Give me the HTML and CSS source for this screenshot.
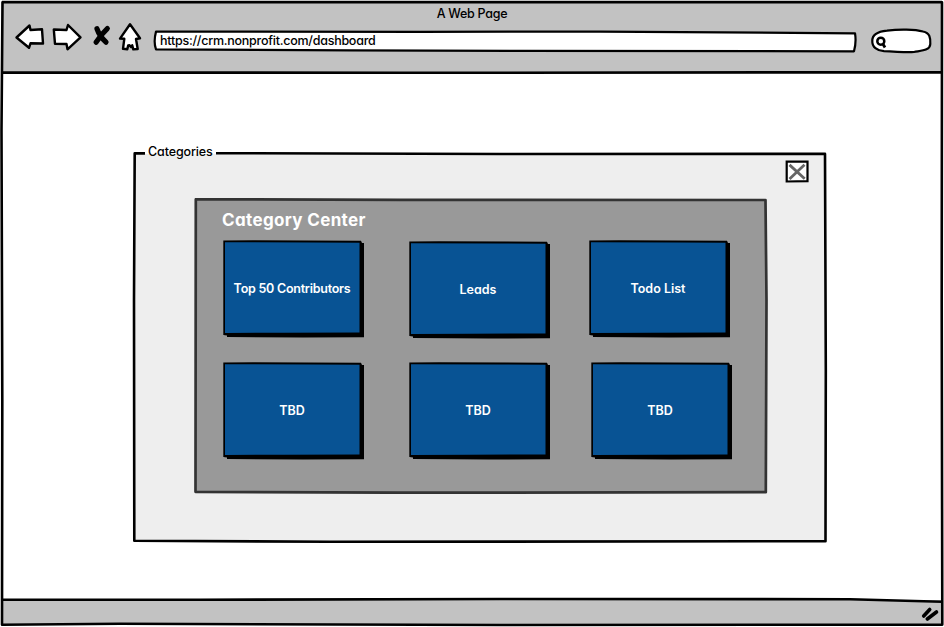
FILE: index.html
```html
<!DOCTYPE html>
<html lang="en">
<head>
<meta charset="utf-8">
<title>A Web Page</title>
<link rel="stylesheet" href="styles.css">
</head>
<body>
<svg class="defs" width="0" height="0" aria-hidden="true">
  <symbol id="tile" viewBox="0 0 142 99">
    <path fill="#000" d="M4 3 L141 3 L141 97.3 L80 97.6 L4 97 L4 95.5 L.3 95 L.3 .5 L30 .2 L138 .8 L139 3 Z"/>
    <path fill="#085394" d="M2 2.3 L90 2.5 L136.5 2.8 L136.5 92.5 L60 92.7 L2 93 Z"/>
  </symbol>
</svg>
<div class="window">
  <header class="chrome">
    <div class="page-title"><span>A Web Page</span></div>
    <nav class="toolbar">
      <svg class="back" width="32" height="32" viewBox="14 22 32 32"><path class="sketch" d="M16.5 37.5 L29.5 25.5 L30.5 30 L42 29.3 L43 43.5 L30.5 43.3 L29 47.8 Z"/></svg>
      <svg class="forward" width="32" height="32" viewBox="51 22 32 32"><path class="sketch" d="M53.8 29.5 L66.5 30 L68 25 L80.5 37.3 L67.5 49.3 L66.5 44 L55 43.8 Z"/></svg>
      <svg class="stop" width="20" height="32" viewBox="92 22 20 32"><path class="stroke" d="M97 28.8 Q99.5 36 106 42.2 M107.3 28.6 Q101 34.5 96.2 42.2"/></svg>
      <svg class="home" width="26" height="32" viewBox="117 22 26 32"><path class="sketch" d="M130 24.3 L140 38.2 L136 39 L137.7 49 L133.3 49.4 L132.2 45.3 L131 47 L129.5 45.2 L128.2 45.4 L127.3 49.2 L123 48.8 L124.3 38.8 L120 38.6 Z"/></svg>
      <div class="address">
        <svg class="backdrop" width="704" height="24" viewBox="153 30 704 24"><path class="sketch thin" d="M156 31.6 L420 31.8 L600 31.6 L855 33.3 Q856.5 42 854 51.3 L520 50.9 L350 50.4 L156 49.3 Q153.3 42 156 31.6 Z"/></svg>
        <span>https://crm.nonprofit.com/dashboard</span>
      </div>
      <svg class="search" width="62" height="28" viewBox="870 27 62 28"><path class="sketch thin" d="M872.3 41 C872 34 878 31.5 887 30.6 C899 29 915 29.2 923 31.5 C930 33 930.5 38 930.3 44 C930 50.5 922 50.5 914 52 C906 52.8 897 51.5 884 51.2 C877 50.7 872 47 872.3 41 Z"/><circle cx="880.8" cy="41.2" r="3.5" fill="none" stroke="#000" stroke-width="2.5"/><path d="M882.8 43.8 L885 47.5" fill="none" stroke="#000" stroke-width="2.8"/></svg>
    </nav>
  </header>
  <main class="page">
    <section class="group">
      <svg class="backdrop" width="696" height="394" viewBox="132 150 696 394"><path fill="#eee" d="M134.5 154 L825 154 L825 541.5 L134.5 540.5 Z"/><path class="line" d="M145 153.4 L134.7 153.4 L134 300 L134.3 540.7 L330 541.8 L825.5 541.2 L825.8 370 L825 153.9 L500 154 L216 153.2"/></svg>
      <div class="legend">Categories</div>
      <svg class="close" width="24" height="23" viewBox="785.5 160.3 24 23"><path fill="#fff" stroke="#000" stroke-width="2.2" d="M787.2 162 L808 161.8 L808 181.5 L787.2 181.8 Z"/><path fill="none" stroke="#666" stroke-width="2.8" d="M790 165.2 L805.2 179 M805 165 L790 179.2"/></svg>
      <div class="panel">
        <svg class="backdrop" width="574" height="296" viewBox="193.5 198 574 296"><path fill="#999" stroke="#333" stroke-width="2.7" stroke-linejoin="round" d="M195.3 199.3 L400 199.8 L765 200 L766 300 L765.3 492.2 L400 492.7 L195 491.8 Z"/></svg>
        <h1>Category Center</h1>
        <div class="tiles">
          <div class="tile"><svg class="backdrop" width="142" height="99"><use href="#tile"/></svg><span class="long">Top 50 Contributors</span></div>
          <div class="tile lower"><svg class="backdrop" width="142" height="99"><use href="#tile"/></svg><span>Leads</span></div>
          <div class="tile"><svg class="backdrop" width="142" height="99"><use href="#tile"/></svg><span>Todo List</span></div>
        </div>
        <div class="tiles second">
          <div class="tile"><svg class="backdrop" width="142" height="99"><use href="#tile"/></svg><span>TBD</span></div>
          <div class="tile"><svg class="backdrop" width="142" height="99"><use href="#tile"/></svg><span>TBD</span></div>
          <div class="tile"><svg class="backdrop" width="142" height="99"><use href="#tile"/></svg><span>TBD</span></div>
        </div>
      </div>
    </section>
  </main>
  <footer class="status">
    <svg width="20" height="18" viewBox="920 605 20 18"><path class="stroke grip" d="M923.7 616 L929.7 609.5 M927.3 619 L936.5 612"/></svg>
  </footer>
  <svg class="frame" width="944" height="627" viewBox="0 0 944 627"><path class="line" d="M2.5 2.3 L942 2.2 L941.7 300 L942.3 624.6 L500 625 L120 623.8 L2 624.8 L2.3 400 L1.5 130 Z M3 72.4 L400 72.8 L942 72.2 M2 599.8 L200 599.8 L500 599 L850 599.2 L942 601.8"/></svg>
</div>
</body>
</html>
```
FILE: styles.css
```css
* { box-sizing: border-box; }
body {
  margin: 0;
  background: #fff;
  color: #000;
  font-family: Inter, "Liberation Sans", sans-serif;
  font-feature-settings: "cv11" 1;
  font-size: 12.5px;
  font-weight: 500;
  line-height: 16px;
}
svg { display: block; flex: none; }
.defs { position: absolute; }
.window {
  position: relative;
  display: flex;
  flex-direction: column;
  width: 944px;
  height: 627px;
  overflow: hidden;
}
.frame { position: absolute; inset: 0; pointer-events: none; }
.backdrop { position: absolute; z-index: -1; top: 0; left: 0; }
.line { fill: none; stroke: #000; stroke-width: 2.6; stroke-linejoin: round; }
.sketch { fill: #fff; stroke: #000; stroke-width: 2.4; stroke-linejoin: round; }
.sketch.thin { stroke-width: 2.2; }
.stroke { fill: none; stroke: #000; stroke-width: 5.2; stroke-linecap: round; }
.stroke.grip { stroke-width: 3.6; }

.chrome { height: 72px; margin: 0 2px; padding-top: 6px; background: #c2c2c2; }
.page-title { height: 16px; text-align: center; letter-spacing: -0.27px; }
.toolbar { display: flex; height: 32px; padding-left: 12px; }
.forward { margin-left: 5px; }
.stop { margin-left: 9px; }
.home { margin-left: 5px; }
.address {
  position: relative;
  z-index: 0;
  width: 704px;
  height: 24px;
  margin: 8px 0 0 10px;
  padding: 3px 7px;
  letter-spacing: -0.25px;
}
.search { margin: 5px 0 0 13px; }

.page { flex: 1; padding: 78px 0 0 132px; }
.group { position: relative; z-index: 0; width: 696px; height: 394px; padding-top: 10px; }
.legend { position: absolute; top: -6px; left: 16px; letter-spacing: -0.12px; }
.close { margin-left: 653px; }
.panel {
  position: relative;
  z-index: 0;
  width: 574px;
  height: 296px;
  margin: 15px 0 0 61.5px;
  padding: 11px 0 0 29px;
}
h1 {
  margin: 0 0 9px -0.5px;
  color: #fff;
  font-size: 17px;
  font-weight: 700;
  line-height: 22px;
  letter-spacing: 0.35px;
}
.tiles { display: grid; grid-template-columns: 186px 180px 142px; align-items: start; height: 122px; }
.tiles.second { grid-template-columns: 186px 182px 142px; }
.tile {
  position: relative;
  z-index: 0;
  display: flex;
  align-items: center;
  justify-content: center;
  width: 142px;
  height: 99px;
  padding: 0 3px 1px 0;
  color: #fff;
  font-weight: 600;
  white-space: nowrap;
}
.long { letter-spacing: -0.25px; }
.lower { margin-top: 1px; }

.status { display: flex; justify-content: flex-end; height: 27px; margin: 0 2px; padding: 5px 2px 0; background: linear-gradient(#c2c2c2 24px, #fff 24px); }
```
